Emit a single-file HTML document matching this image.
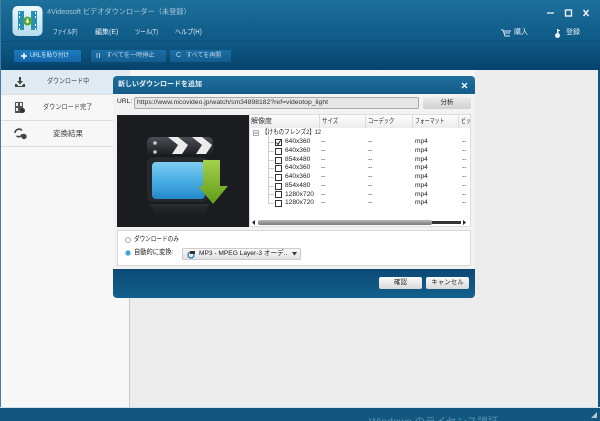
<!DOCTYPE html>
<html><head><meta charset="utf-8"><style>
*{box-sizing:border-box}
html,body{margin:0;padding:0;width:600px;height:421px;overflow:hidden;background:#ececec;font-family:"Liberation Sans","Noto Sans CJK JP",sans-serif}
#w{position:absolute;left:0;top:0;width:600px;height:421px;overflow:hidden;filter:blur(.3px)}
.a{position:absolute;white-space:nowrap}
.top{position:absolute;left:0;top:0;width:600px;height:70px;background:linear-gradient(#1d7099,#125f8c 42%,#0f5a86 60%,#06426c)}
.t{position:absolute;white-space:nowrap;font-size:6.6px;line-height:10px;color:#1c1c1c;transform-origin:0 0}
.m{position:absolute;white-space:nowrap;font-size:7px;line-height:10px;color:#e2eef5;top:28px;transform-origin:0 0}
.tb{position:absolute;top:50px;height:12px;border-radius:1px;background:linear-gradient(#1a6ea4,#135c8f)}
.tl{position:absolute;top:51px;font-size:6.2px;line-height:10px;color:#bcd5e5;white-space:nowrap;transform-origin:0 0}
.side{position:absolute;left:1px;width:129px;height:26px;border-bottom:1px solid #dcdcdc}
.btn{position:absolute;background:linear-gradient(#fafafa,#d9d9d9);border-radius:2px;font-size:6.5px;color:#222;text-align:center}
.cb{position:absolute;left:275px;width:7px;height:7px;border:1px solid #333;background:#fff}
.h{position:absolute;top:117px;font-size:7px;line-height:10px;color:#333;white-space:nowrap;transform-origin:0 0}
.v{position:absolute;width:1px;height:13px;top:115px;background:#dcdcdc}
.hl{position:absolute;left:268px;width:6px;height:1px;background:#ccc}
</style></head><body><div id="w">
<div class="top"></div>
<div class="a" style="left:0;top:41px;width:600px;height:1px;background:#0e4f78"></div>
<svg class="a" style="left:12px;top:6px" width="31" height="30" viewBox="0 0 31 30">
<defs><linearGradient id="g1" x1="0" y1="0" x2="0" y2="1"><stop offset="0" stop-color="#eef8fc"/><stop offset="1" stop-color="#b5dcec"/></linearGradient></defs>
<rect x="0.5" y="0" width="30" height="30" rx="5" fill="url(#g1)"/>
<rect x="6" y="5" width="6" height="19" fill="#2a8fb4"/><rect x="19" y="5" width="6" height="19" fill="#2a8fb4"/>
<rect x="12" y="13" width="7" height="3" fill="#2a8fb4"/>
<path d="M7 6h1v2H7zM7 10h1v2H7zM7 18h1v2H7zM7 22h1v2H7zM23 6h1v2h-1zM23 10h1v2h-1zM23 18h1v2h-1zM23 22h1v2h-1z" fill="#dff"/>
<circle cx="15.5" cy="15" r="4.5" fill="#54a62e"/><path d="M14.7 12.5h1.6v2.5h1.3l-2.1 2.6-2.1-2.6h1.3z" fill="#fff"/>
</svg>
<div class="a" style="left:47px;top:6px;font-size:7.2px;line-height:11px;color:#a9c8da">4Videosoft ビデオダウンローダー（未登録）</div>
<div class="m" style="left:53px;transform:scaleX(.66)">ファイル(F)</div><div class="m" style="left:95px">編集(E)</div><div class="m" style="left:135px;transform:scaleX(.77)">ツール(T)</div><div class="m" style="left:175px;transform:scaleX(.87)">ヘルプ(H)</div>
<svg class="a" style="left:545px;top:8px" width="50" height="10"><path d="M2 5h7" stroke="#dfeaf0" stroke-width="1.4"/><rect x="20.500" y="2" width="6" height="6" fill="none" stroke="#eef" stroke-width="1.4"/><path d="M38.500 2l5 6m0-6l-5 6" stroke="#eef" stroke-width="1.5"/></svg>
<svg class="a" style="left:500px;top:28px" width="12" height="10"><path d="M1 2h2l2 6h5M4 3h7M4.500 5h5.500" stroke="#dce9f0" stroke-width="1" fill="none"/></svg>
<div class="m" style="left:514px">購入</div>
<svg class="a" style="left:554px;top:28px" width="8" height="11"><circle cx="3.500" cy="7.500" r="2.500" fill="#e8f0f4"/><path d="M3 1h1.500v5H3zM4 2h2v1H4z" fill="#e8f0f4"/></svg>
<div class="m" style="left:566px">登録</div>
<div class="tb" style="left:14px;width:67px;background:linear-gradient(#1b7cc0,#1565a8)"></div>
<svg class="a" style="left:20px;top:52px" width="8" height="8"><path d="M4 1v6M1 4h6" stroke="#fff" stroke-width="1.500"/></svg>
<div class="tl" style="left:30px;color:#dbeaf4;transform:scaleX(.9)">URLを貼り付け</div>
<div class="tb" style="left:91px;width:75px"></div>
<svg class="a" style="left:96px;top:53px" width="5" height="6"><path d="M1 0v5M3.500 0v5" stroke="#a9c5d8"/></svg>
<div class="tl" style="left:106px">すべてを一時停止</div>
<div class="tb" style="left:170px;width:61px"></div>
<div class="tl" style="left:176px;font-size:7px">C</div>
<div class="tl" style="left:186px;font-size:6px">すべてを再開</div>

<div class="a" style="left:1px;top:70px;width:129px;height:337px;background:#f7f7f7;border-right:1px solid #c8c8c8"></div>
<div class="a" style="left:130px;top:70px;width:468px;height:337px;background:#ececec"></div>
<div class="a" style="left:130px;top:70px;width:345px;height:6px;background:#f6f6f6"></div>
<div class="side" style="top:70px;height:25px;background:#dfeaf3"></div>
<div class="side" style="top:95px"></div>
<div class="side" style="top:121px"></div>
<div class="t" style="left:47px;top:77px;font-size:7px;color:#444;transform:scaleX(.86)">ダウンロード中</div>
<div class="t" style="left:43px;top:103px;font-size:7px;color:#444;transform:scaleX(.88)">ダウンロード完了</div>
<div class="t" style="left:53px;top:129px;font-size:7.500px;color:#444">変換結果</div>
<svg class="a" style="left:14px;top:76px" width="12" height="12"><path d="M5 1h2v4h2L6 8.500 3 5h2zM1 8h2l1 2h4l1-2h2v3H1z" fill="#444"/></svg>
<svg class="a" style="left:14px;top:101px" width="12" height="13"><path d="M1 1h8v11H1z" fill="#555"/><path d="M2 2h2v3H2zM6 2h2v3H6zM2 7h2v3H2z" fill="#eee"/><circle cx="8.500" cy="9.500" r="2.500" fill="#333"/></svg>
<svg class="a" style="left:13px;top:127px" width="15" height="13"><path d="M2 6a4 4 0 0 1 7-2.500M9.500 7a4 4 0 0 1-6 2" stroke="#444" stroke-width="1.600" fill="none"/><circle cx="11" cy="9.500" r="2.700" fill="#444"/></svg>

<div class="a" style="left:0;top:0;width:1px;height:421px;background:#3f7fa0"></div>
<div class="a" style="left:598px;top:70px;width:2px;height:351px;background:#10567f"></div>
<div class="a" style="left:0;top:407px;width:600px;height:14px;background:#11577f;border-top:1px solid #cfe0e8"></div>
<div class="a" style="left:369px;top:415px;font-size:10.500px;line-height:14px;color:#5f93b0">Windows のライセンス認証</div>
<svg class="a" style="left:590px;top:411px" width="8" height="8"><path d="M7 1v6H1z" fill="#b5cad6"/></svg>

<div class="a" style="left:113px;top:76px;width:362px;height:222px;border-radius:4px;background:#f2f2f2;overflow:hidden">
<div class="a" style="left:0;top:0;width:362px;height:18px;background:linear-gradient(#1f6f9d,#125b88)"></div>
<div class="a" style="left:0;top:193px;width:362px;height:29px;background:linear-gradient(#0b4a75,#13608d)"></div>
</div>
<div class="a" style="left:118px;top:79px;font-size:7px;line-height:12px;color:#e9f2f7;font-weight:bold">新しいダウンロードを追加</div>
<svg class="a" style="left:460px;top:81px" width="9" height="9"><path d="M2 2l5 5m0-5L2 7" stroke="#e8f0f5" stroke-width="1.500"/></svg>
<div class="t" style="left:117px;top:97px">URL:</div>
<div class="a" style="left:134px;top:97px;width:285px;height:12px;border:1px solid #a8a8a8;border-radius:2px;background:#e6e6e6;font-size:6.800px;line-height:10px;padding-left:2px;color:#333">https://www.nicovideo.jp/watch/sm34898182?ref=videotop_light</div>
<div class="btn" style="left:423px;top:97px;width:48px;height:12px;line-height:12px;background:linear-gradient(#ececec,#d0d0d0)">分析</div>

<div class="a" style="left:117px;top:115px;width:132px;height:112px;background:#1b1c20"></div>
<div class="a" style="left:249px;top:114px;width:222px;height:113px;background:#fff;border:1px solid #ddd"></div>
<div class="a" style="left:250px;top:115px;width:220px;height:13px;background:linear-gradient(#fcfcfc,#ececec)"></div>
<div class="v" style="left:319px"></div><div class="v" style="left:365px"></div><div class="v" style="left:412px"></div><div class="v" style="left:458px"></div>
<svg class="a" style="left:117px;top:115px" width="132" height="112" viewBox="117 115 132 112">
<defs>
<linearGradient id="bl" x1="0" y1="0" x2="0" y2="1"><stop offset="0" stop-color="#7fcdf0"/><stop offset="0.5" stop-color="#4aaee6"/><stop offset="1" stop-color="#2488c8"/></linearGradient>
<linearGradient id="gr" x1="0" y1="0" x2="0" y2="1"><stop offset="0" stop-color="#a5d04a"/><stop offset="1" stop-color="#5e9c18"/></linearGradient>
<linearGradient id="bk" x1="0" y1="0" x2="0" y2="1"><stop offset="0" stop-color="#4a4e55"/><stop offset="1" stop-color="#17181b"/></linearGradient>
<linearGradient id="rf" x1="0" y1="0" x2="0" y2="1"><stop offset="0" stop-color="#33373c" stop-opacity=".7"/><stop offset="1" stop-color="#1b1c20" stop-opacity="0"/></linearGradient>
</defs>
<path d="M147 142a5 5 0 0 1 5-5h56a5 5 0 0 1 5 5v15h-66z" fill="url(#bk)"/>
<path d="M168 137h10l10 8-6 9h-10l6-9zM192 137h10l10 8-6 9h-10l6-9z" fill="#ececec"/>
<circle cx="155" cy="143" r="1.800" fill="#ccc"/><circle cx="155" cy="152" r="1.800" fill="#ccc"/>
<rect x="147" y="157" width="61" height="45" rx="6" fill="#25282d"/>
<rect x="152" y="162" width="53" height="37" rx="4" fill="url(#bl)"/>
<path d="M203 160h17v26h8l-15 18-15-18h5z" fill="url(#gr)"/>
<path d="M150 204h60l-8 14h-44z" fill="url(#rf)"/>
</svg>
<div class="h" style="left:251px">解像度</div><div class="h" style="left:322px;transform:scaleX(.78)">サイズ</div><div class="h" style="left:368px;transform:scaleX(.75)">コーデック</div><div class="h" style="left:415px;transform:scaleX(.7)">フォーマット</div><div class="h" style="left:461px;transform:scaleX(.7)">ビッ</div>
<svg class="a" style="left:253px;top:130px" width="6" height="6"><rect x=".5" y=".5" width="5" height="5" fill="#fff" stroke="#aaa"/><path d="M1.500 3h3" stroke="#666"/></svg>
<div class="t" style="left:262px;top:128px;transform:scaleX(.84)">【けものフレンズ2】12</div>
<div class="a" style="left:268px;top:135px;width:1px;height:68px;background:#ccc"></div>
<div class="hl" style="top:142px"></div><div class="hl" style="top:151px"></div><div class="hl" style="top:160px"></div><div class="hl" style="top:168px"></div><div class="hl" style="top:177px"></div><div class="hl" style="top:186px"></div><div class="hl" style="top:194px"></div><div class="hl" style="top:203px"></div>
<div class="cb" style="top:139px"></div>
<svg class="a" style="left:275px;top:139px" width="7" height="7"><path d="M1.500 3.500l1.500 2 2.500-4" stroke="#222" stroke-width="1" fill="none"/></svg>
<div class="cb" style="top:148px"></div><div class="cb" style="top:157px"></div><div class="cb" style="top:165px"></div><div class="cb" style="top:174px"></div><div class="cb" style="top:183px"></div><div class="cb" style="top:191px"></div><div class="cb" style="top:200px"></div>
<div class="t" style="left:285px;top:137px">640x360</div><div class="t" style="left:285px;top:146px">640x360</div><div class="t" style="left:285px;top:155px">854x480</div><div class="t" style="left:285px;top:163px">640x360</div><div class="t" style="left:285px;top:172px">640x360</div><div class="t" style="left:285px;top:181px">854x480</div><div class="t" style="left:285px;top:190px">1280x720</div><div class="t" style="left:285px;top:198px">1280x720</div>
<div class="t" style="left:321px;top:137px">--</div><div class="t" style="left:321px;top:146px">--</div><div class="t" style="left:321px;top:155px">--</div><div class="t" style="left:321px;top:163px">--</div><div class="t" style="left:321px;top:172px">--</div><div class="t" style="left:321px;top:181px">--</div><div class="t" style="left:321px;top:190px">--</div><div class="t" style="left:321px;top:198px">--</div>
<div class="t" style="left:368px;top:137px">--</div><div class="t" style="left:368px;top:146px">--</div><div class="t" style="left:368px;top:155px">--</div><div class="t" style="left:368px;top:163px">--</div><div class="t" style="left:368px;top:172px">--</div><div class="t" style="left:368px;top:181px">--</div><div class="t" style="left:368px;top:190px">--</div><div class="t" style="left:368px;top:198px">--</div>
<div class="t" style="left:415px;top:137px">mp4</div><div class="t" style="left:415px;top:146px">mp4</div><div class="t" style="left:415px;top:155px">mp4</div><div class="t" style="left:415px;top:163px">mp4</div><div class="t" style="left:415px;top:172px">mp4</div><div class="t" style="left:415px;top:181px">mp4</div><div class="t" style="left:415px;top:190px">mp4</div><div class="t" style="left:415px;top:198px">mp4</div>
<div class="t" style="left:462px;top:137px">--</div><div class="t" style="left:462px;top:146px">--</div><div class="t" style="left:462px;top:155px">--</div><div class="t" style="left:462px;top:163px">--</div><div class="t" style="left:462px;top:172px">--</div><div class="t" style="left:462px;top:181px">--</div><div class="t" style="left:462px;top:190px">--</div><div class="t" style="left:462px;top:198px">--</div>
<div class="a" style="left:258px;top:221px;width:203px;height:3px;background:#333"></div>
<div class="a" style="left:258px;top:220px;width:174px;height:5px;border-radius:2px;background:linear-gradient(#bbb,#777)"></div>
<svg class="a" style="left:251px;top:220px" width="216" height="5"><path d="M1 2.500L4 0v5zM215 2.500L212 0v5z" fill="#222"/></svg>

<div class="a" style="left:117px;top:230px;width:354px;height:36px;background:#fff;border:1px solid #d8d8d8"></div>
<div class="a" style="left:125px;top:237px;width:6px;height:6px;border-radius:50%;border:1px solid #aaa;background:#fff"></div>
<div class="t" style="left:134px;top:235px;transform:scaleX(.85)">ダウンロードのみ</div>
<div class="a" style="left:125px;top:250px;width:6px;height:6px;border-radius:50%;border:1px solid #9cc;background:#3ba0dc"></div>
<div class="t" style="left:134px;top:248px;transform:scaleX(.95)">自動的に変換:</div>
<div class="a" style="left:182px;top:248px;width:119px;height:12px;border:1px solid #ccc;border-radius:1px;background:linear-gradient(#f8f8f8,#e2e2e2)"></div>
<svg class="a" style="left:187px;top:250px" width="9" height="9"><circle cx="4" cy="5" r="3" fill="none" stroke="#2a7cb5" stroke-width="1.300"/><path d="M3 1h5v3H3z" fill="#333"/></svg>
<div class="t" style="left:199px;top:249px">MP3 - MPEG Layer-3 オーデ..</div>
<svg class="a" style="left:292px;top:252px" width="6" height="4"><path d="M0 0h5L2.500 3.500z" fill="#333"/></svg>
<div class="btn" style="left:379px;top:277px;width:43px;height:12px;line-height:12px">確認</div>
<div class="btn" style="left:426px;top:277px;width:43px;height:12px;line-height:12px">キャンセル</div>
</div></body></html>
